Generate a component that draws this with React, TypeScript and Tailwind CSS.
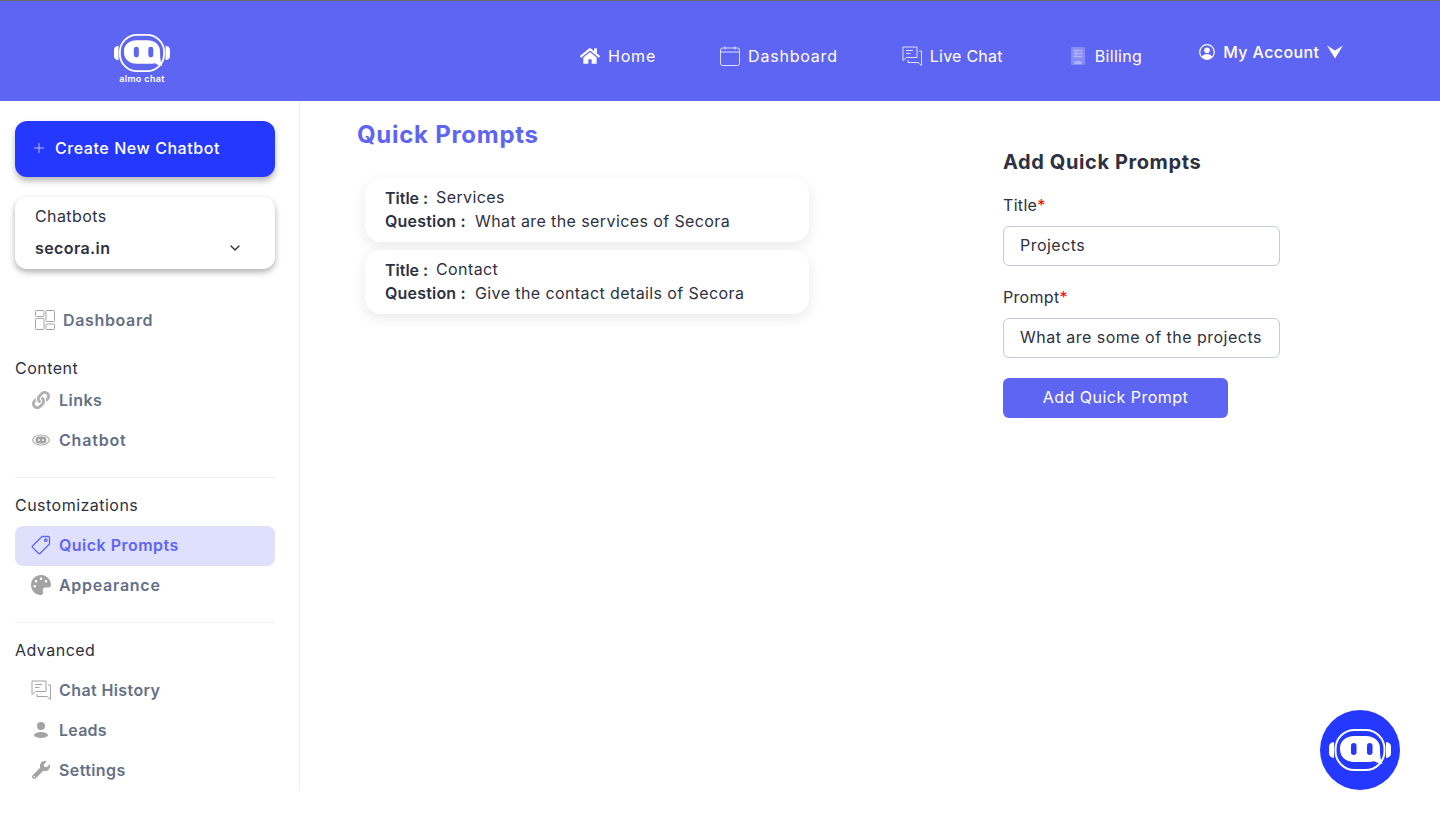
import type { ReactNode } from "react";
import { FaHome, FaLink, FaPalette, FaWrench } from "react-icons/fa";
import { ChevronDown, Plus } from "lucide-react";

function BotLogo({ className }: { className: string }) {
  return (
    <svg viewBox="0 0 62 42" className={className} fill="none">
      <path d="M5 13C2 13.500 0 15 0 17.500v7C0 27 2 28.500 5 29z" fill="#fff" />
      <path d="M57 13c3 .5 5 2 5 4.500v7c0 2.500-2 4-5 4.500z" fill="#fff" />
      <rect x="6.500" y="1" width="49" height="40" rx="19" stroke="#fff" strokeWidth="2" />
      <path
        d="M25 7h12c8 0 14 5 14 12v3c0 3 .5 9 2.500 13-3-.3-6-1.200-8-2.700-2 .5-4.500.7-7.500.7H25c-8 0-14-5-14-13v-1C11 12 17 7 25 7z"
        fill="#fff"
      />
      <rect x="22" y="14" width="5.500" height="12" rx="2.750" fill="currentColor" />
      <rect x="38" y="14" width="5.500" height="12" rx="2.750" fill="currentColor" />
    </svg>
  );
}

function CalendarIcon() {
  return (
    <svg viewBox="0 0 20 20" className="h-5 w-5" fill="none" stroke="#fff" strokeOpacity="0.8" strokeWidth="1">
      <rect x="0.500" y="2" width="19" height="17.500" rx="2" />
      <path d="M0.500 6h19M5 0.500v3M15 0.500v3" />
    </svg>
  );
}

function ChatsIcon({ color, opacity }: { color: string; opacity?: number }) {
  return (
    <svg viewBox="0 0 20 20" className="h-5 w-5" fill="none" stroke={color} strokeOpacity={opacity} strokeWidth="1">
      <path d="M1 1h14v10.500H4.500L1 14.500z" />
      <path d="M17 5h2.500v14.500l-3.500-3H6v-2.500" />
      <path d="M4 4.500h7M4 7.500h4.500" strokeWidth="1.200" />
    </svg>
  );
}

function BillingIcon() {
  return (
    <svg viewBox="0 0 14 18" className="h-[18px] w-[14px]">
      <rect width="14" height="18" rx="1" fill="#fff" fillOpacity="0.25" />
      <path d="M2.500 3.500h9M2.500 6.500h9M2.500 9.500h9M5 3v7.500" stroke="#fff" strokeOpacity="0.35" strokeWidth="1.300" />
      <path d="M3 17l1.500-3h5L11 17z" fill="#fff" fillOpacity="0.35" />
    </svg>
  );
}

function AccountIcon() {
  return (
    <svg viewBox="0 0 16 16" className="h-4 w-4">
      <circle cx="8" cy="8" r="7.300" fill="none" stroke="#fff" strokeWidth="1.200" />
      <circle cx="8" cy="6.300" r="2.800" fill="#fff" />
      <path d="M2.800 12.800C4 10.800 5.800 10 8 10s4 .8 5.200 2.800C12 14.300 10 15.200 8 15.200s-4-.9-5.200-2.400z" fill="#fff" />
    </svg>
  );
}

function DashboardIcon() {
  return (
    <svg viewBox="0 0 20 20" className="h-5 w-5" fill="none" stroke="#a3a3a3" strokeWidth="1">
      <rect x="0.500" y="0.500" width="8.500" height="6" rx="1" />
      <rect x="0.500" y="8.500" width="8.500" height="11" rx="1" />
      <rect x="11" y="0.500" width="8.500" height="11" rx="1" />
      <rect x="11" y="14" width="8.500" height="5.500" rx="1" />
    </svg>
  );
}

function EyeBotIcon() {
  return (
    <svg viewBox="0 0 18 12" className="h-3 w-[18px]">
      <ellipse cx="9" cy="6" rx="8.300" ry="5" fill="none" stroke="#b0b0b0" strokeWidth="1.200" />
      <rect x="3.500" y="2.500" width="11" height="7" rx="3.500" fill="#a3a3a3" />
      <circle cx="7" cy="6" r="1" fill="#fff" />
      <circle cx="11" cy="6" r="1" fill="#fff" />
    </svg>
  );
}

function TagIcon() {
  return (
    <svg viewBox="0 0 20 20" className="h-5 w-5" fill="none" stroke="#5f65f3" strokeWidth="1.300" strokeLinejoin="round">
      <path d="M11 1.500h6.500c.6 0 1 .4 1 1V9L9 18.500c-.4.4-1 .4-1.400 0L1.500 12.400c-.4-.4-.4-1 0-1.400z" />
      <circle cx="14.800" cy="5.200" r="1.200" />
    </svg>
  );
}

function LeadIcon() {
  return (
    <svg viewBox="0 0 14 16" className="h-4 w-[14px]" fill="#a3a3a3">
      <circle cx="7" cy="4" r="4" />
      <ellipse cx="7" cy="13" rx="7" ry="3" />
    </svg>
  );
}

function SideItem({
  icon,
  label,
  active,
  className = "",
}: {
  icon: ReactNode;
  label: string;
  active?: boolean;
  className?: string;
}) {
  return (
    <div
      className={`flex h-10 items-center gap-2 rounded-lg pl-4 text-[16px] font-semibold ${
        active ? "bg-[#dfe0fb] text-[#5f65f3]" : "text-[#667085]"
      } ${className}`}
    >
      <span className="flex w-5 items-center justify-center">{icon}</span>
      {label}
    </div>
  );
}

function GroupLabel({ children, className }: { children: string; className: string }) {
  return <div className={`h-6 text-[16px] leading-6 tracking-[0.03em] text-[#2d3142] ${className}`}>{children}</div>;
}

function NavLink({ icon, label, className }: { icon: ReactNode; label: string; className: string }) {
  return (
    <a className={`mt-[45px] flex h-5 items-center text-[16px] text-white ${className}`}>
      {icon}
      {label}
    </a>
  );
}

function PromptCard({ title, question }: { title: string; question: string }) {
  return (
    <div className="flex h-16 flex-col justify-center rounded-2xl bg-white pb-0.5 pl-5 text-[16px] leading-6 tracking-[0.025em] text-[#2d3142] shadow-[0_4px_14px_rgba(0,0,0,0.09)]">
      <div className="flex items-baseline">
        <b className="w-[51px] font-semibold tracking-normal">Title :</b>
        <span className="-translate-y-px">{title}</span>
      </div>
      <div className="-mt-px flex items-baseline">
        <b className="w-[90px] font-semibold tracking-[0.012em]">Question :</b>
        <span>{question}</span>
      </div>
    </div>
  );
}

function Field({ label, value, className }: { label: string; value: string; className: string }) {
  return (
    <label className={`block ${className}`}>
      <span className="block h-6 text-[16px] leading-6 tracking-[0.02em] text-[#2d3142]">
        {label}
        <span className="text-[#ff0000]">*</span>
      </span>
      <input
        readOnly
        value={value}
        className="mt-[9px] block h-10 w-[277px] rounded-md border border-[#c3cadb] bg-white pb-0.5 pl-4 text-[16px] tracking-[0.03em] text-[#2d3142] outline-none"
      />
    </label>
  );
}

export default function App() {
  return (
    <div className="relative h-[816px] overflow-hidden bg-white font-['Inter',sans-serif]">
      <header className="flex h-[101px] border-t border-[#6b6b6b] bg-[#5f65f3]">
        <div className="ml-[114px] mt-[33px] flex w-[56px] flex-col items-center text-[#5f65f3]">
          <BotLogo className="h-[38px] w-[56px]" />
          <span className="mt-[2px] text-[9px] font-semibold leading-[10px] tracking-[0.04em] text-white">almo chat</span>
        </div>
        <nav className="flex">
          <NavLink icon={<FaHome className="mr-2 h-5 w-5" />} label="Home" className="ml-[410px] tracking-[0.05em]" />
          <NavLink icon={<CalendarIcon />} label="Dashboard" className="ml-[64px] gap-2 tracking-[0.05em]" />
          <NavLink icon={<ChatsIcon color="#fff" opacity={0.8} />} label="Live Chat" className="ml-[64px] gap-2 tracking-[0.015em]" />
          <NavLink icon={<BillingIcon />} label="Billing" className="ml-[68px] gap-[10px] tracking-[0.02em]" />
          <a className="ml-[57px] mt-[41px] flex h-5 items-center text-[16px] font-medium tracking-[0.025em] text-white">
            <AccountIcon />
            <span className="ml-2">My Account</span>
            <svg viewBox="0 0 17 14" className="ml-2 h-[14px] w-4" fill="#fff">
              <path d="M0 0l8.500 5.500L17 0 8.500 14z" />
            </svg>
          </a>
        </nav>
      </header>

      <div className="flex">
        <aside className="h-[690px] w-[300px] border-r border-[#eeeeee] pl-[15px] pr-[24px] pt-5">
          <button className="flex h-14 w-[260px] items-center rounded-xl bg-[#2438ff] pb-0.5 pl-4 text-[16px] font-medium tracking-[0.035em] text-white shadow-[0_4px_6px_rgba(0,0,0,0.28)]">
            <Plus className="mr-[8px] h-4 w-4 text-[#c9cfff]" strokeWidth={1.300} />
            Create New Chatbot
          </button>
          <div className="mt-5 h-[72px] w-[260px] rounded-xl bg-white px-5 pt-[7px] text-[#2d3142] shadow-[0_3px_6px_rgba(0,0,0,0.32)]">
            <div className="h-6 text-[16px] leading-6 tracking-[0.025em]">Chatbots</div>
            <div className="mt-2 flex h-6 items-center justify-between pr-[12px] text-[16px] font-semibold tracking-[0.025em]">
              secora.in
              <ChevronDown className="h-4 w-4" strokeWidth={2} />
            </div>
          </div>

          <div className="mt-[31px] flex h-10 items-center gap-2 pl-5 text-[16px] font-semibold tracking-[0.04em] text-[#667085]">
            <DashboardIcon />
            Dashboard
          </div>

          <GroupLabel className="mt-[16px]">Content</GroupLabel>
          <SideItem icon={<FaLink className="h-[18px] w-[18px] text-[#b0b0b0]" />} label="Links" className="tracking-[0.03em]" />
          <SideItem icon={<EyeBotIcon />} label="Chatbot" className="tracking-[0.05em]" />
          <div className="mt-[17px] w-[260px] border-t border-[#eeeeee]" />

          <GroupLabel className="mb-[9px] mt-[15px]">Customizations</GroupLabel>
          <SideItem icon={<TagIcon />} label="Quick Prompts" active className="pb-0.5 tracking-[0.03em]" />
          <SideItem icon={<FaPalette className="h-5 w-5 text-[#a3a3a3]" />} label="Appearance" className="pb-0.5 tracking-[0.045em]" />
          <div className="mt-4 w-[260px] border-t border-[#eeeeee]" />

          <GroupLabel className="mb-[9px] mt-[15px]">Advanced</GroupLabel>
          <SideItem icon={<ChatsIcon color="#a3a3a3" />} label="Chat History" className="pb-0.5 tracking-[0.025em]" />
          <SideItem icon={<LeadIcon />} label="Leads" className="pb-0.5 tracking-[0.015em]" />
          <SideItem icon={<FaWrench className="h-[18px] w-[18px] text-[#a3a3a3]" />} label="Settings" className="pb-0.5 tracking-[0.025em]" />
        </aside>

        <main className="flex flex-1 pl-[57px]">
          <section className="w-[452px]">
            <h1 className="mt-[18px] h-8 text-[24px] font-bold leading-8 tracking-[0.03em] text-[#5f65f3]">Quick Prompts</h1>
            <div className="ml-2 mt-[27px] flex w-[444px] flex-col gap-2">
              <PromptCard title="Services" question="What are the services of Secora" />
              <PromptCard title="Contact" question="Give the contact details of Secora" />
            </div>
          </section>
          <section className="ml-[194px] w-[277px]">
            <h2 className="mt-[47px] h-7 text-[20px] font-bold leading-7 tracking-[0.03em] text-[#2d3142]">Add Quick Prompts</h2>
            <Field label="Title" value="Projects" className="mt-[17px]" />
            <Field label="Prompt" value="What are some of the projects" className="mt-[19px]" />
            <button className="mt-5 h-10 w-[225px] rounded-md bg-[#5f65f3] pb-0.5 text-[16px] tracking-[0.03em] text-white">Add Quick Prompt</button>
          </section>
        </main>
      </div>

      <div className="absolute left-[1320px] top-[710px] flex h-20 w-20 items-center justify-center rounded-full bg-[#2438ff] text-[#2438ff]">
        <BotLogo className="h-[42px] w-[62px]" />
      </div>
    </div>
  );
}
